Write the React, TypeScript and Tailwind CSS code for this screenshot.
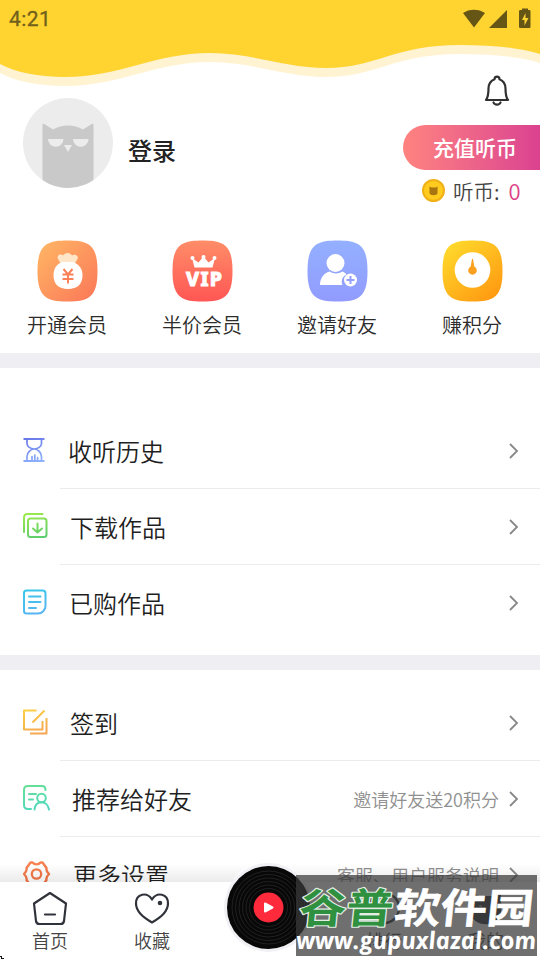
import type { ReactNode } from 'react'

const quickActions = [
  { label: '开通会员', icon: <MoneyBagIcon /> },
  { label: '半价会员', icon: <VipIcon /> },
  { label: '邀请好友', icon: <InviteIcon /> },
  { label: '赚积分', icon: <PointsIcon /> },
]

const TILE = 'M30.5 0.5C52 0.5 60.5 5 60.5 31S52 61.5 30.5 61.5 0.5 57 0.5 31 9 0.5 30.5 0.5Z'

function MoneyBagIcon() {
  return (
    <svg width="61" height="62" viewBox="0 0 61 62">
      <defs>
        <linearGradient id="bag" x1="0" y1="0" x2="1" y2="1">
          <stop offset="0" stopColor="#ffb865" />
          <stop offset="1" stopColor="#fb7658" />
        </linearGradient>
      </defs>
      <path d={TILE} fill="url(#bag)" />
      <path d="M24 24l-3-5c-1.500-4 2.500-5.500 5-3.500 1.500-3.500 7.500-3.500 9 0 3-2 7 .500 5.500 3.500l-3 5z" fill="#ffe6c8" />
      <path d="M25 22h11c6 2 9.500 7 9.500 13 0 9-5 14-14.500 14s-14.500-5-14.500-14c0-6 3-11 8.500-13Z" fill="#fff" />
      <path d="M26.500 29l4.500 5.500 4.500-5.500M25.500 34.500h11M25.500 39h11M31 34.500v9" fill="none" stroke="#fa8058" strokeWidth="2" />
    </svg>
  )
}

function VipIcon() {
  return (
    <svg width="61" height="62" viewBox="0 0 61 62">
      <defs>
        <linearGradient id="vip" x1="0" y1="0" x2="0" y2="1">
          <stop offset="0" stopColor="#ff8d68" />
          <stop offset="1" stopColor="#ff5654" />
        </linearGradient>
      </defs>
      <path d={TILE} fill="url(#vip)" />
      <path d="M20 18l6.500 4.500 5-6 5 6L43 18l-2.500 9.500h-18Z" fill="#fff" />
      <circle cx="20.500" cy="18" r="2" fill="#fff" />
      <circle cx="31.500" cy="17" r="2" fill="#fff" />
      <circle cx="42.500" cy="18" r="2" fill="#fff" />
      <text x="14" y="45.500" fill="#fff" stroke="#fff" strokeWidth="0.900" fontFamily="Noto Sans" fontWeight="800" fontSize="19.500" textLength="36" lengthAdjust="spacing">VIP</text>
    </svg>
  )
}

function InviteIcon() {
  return (
    <svg width="61" height="62" viewBox="0 0 61 62">
      <defs>
        <linearGradient id="invite" x1="0" y1="0" x2="0" y2="1">
          <stop offset="0" stopColor="#94b0ff" />
          <stop offset="1" stopColor="#919bfe" />
        </linearGradient>
      </defs>
      <path d={TILE} fill="url(#invite)" />
      <circle cx="28.500" cy="23" r="9" fill="#fff" />
      <path d="M13 45c0-7 4-12 9.500-13.500 4 2.500 9 2.500 13 0 1.500.500 3 1.500 4 3-5 2.500-5.500 7-4 10.500Z" fill="#fff" />
      <circle cx="43.500" cy="40" r="6.500" fill="#fff" />
      <path d="M39.500 40h8M43.500 36v8" stroke="#939fff" strokeWidth="2" />
    </svg>
  )
}

function PointsIcon() {
  return (
    <svg width="61" height="62" viewBox="0 0 61 62">
      <defs>
        <linearGradient id="points" x1="0.1" y1="0" x2="0.9" y2="1">
          <stop offset="0" stopColor="#ffdc2c" />
          <stop offset="1" stopColor="#ff9610" />
        </linearGradient>
      </defs>
      <path d={TILE} fill="url(#points)" />
      <circle cx="30.500" cy="30" r="17.800" fill="#fff" />
      <path d="M30 19h1l1.300 7.500a4.300 4.300 0 1 1-3.600 0Z" fill="#f9a01f" />
    </svg>
  )
}

function LineIcon({ id, from, to, children }: { id: string; from: string; to: string; children: ReactNode }) {
  return (
    <svg className="mb-[2px] shrink-0" width="28" height="26" viewBox="0 0 28 26" fill="none" stroke={`url(#${id})`} strokeWidth="2" strokeLinecap="round" strokeLinejoin="round">
      <defs>
        <linearGradient id={id} gradientUnits="userSpaceOnUse" x1="8" y1="0" x2="16" y2="26">
          <stop offset="0" stopColor={from} />
          <stop offset="1" stopColor={to} />
        </linearGradient>
      </defs>
      {children}
    </svg>
  )
}

const HistoryIcon = () => (
  <LineIcon id="history" from="#6878e8" to="#8fb4ff">
    <path d="M0.500 2h21M0.500 24h21" strokeLinecap="butt" />
    <path d="M4 2.500v4c0 3 3.500 5.500 7.200 5.500s7.300-2.500 7.300-5.500v-4M4 23.500v-4c0-3.500 3.500-7.500 7.200-7.500s7.300 4 7.300 7.500v4M9 23v-3.500M11.800 23v-5M14.600 23v-2.500" strokeWidth="1.700" />
  </LineIcon>
)

const DownloadIcon = () => (
  <LineIcon id="download" from="#9bea4b" to="#5ccc70">
    <path d="M1 19V4.500C1 2.500 2.500 1 4.500 1h15" />
    <rect x="5" y="5.500" width="18.500" height="18.500" rx="2.500" />
    <path d="M14.500 10.500v9M10 15.500l4.500 4 4.500-4" />
  </LineIcon>
)

const PurchasedIcon = () => (
  <LineIcon id="purchased" from="#39c7ea" to="#58b4f4">
    <path d="M3.500 1.500H19.500c2 0 3 1 3 3v12.500c0 4-3.500 7.500-7.500 7.500H3.500C2 24.500 1 23.500 1 22V4C1 2.500 2 1.500 3.500 1.500ZM6 7.500h11.500M6 13h11.500M6 19h7" />
  </LineIcon>
)

const SignIcon = () => (
  <LineIcon id="sign" from="#fad044" to="#f5a452">
    <path d="M13.500 1.500H1V20.500h18.500v-8.500M21.500 1.500L9.500 13.500M23.500 9v15.500H7" strokeLinecap="butt" />
  </LineIcon>
)

const RecommendIcon = () => (
  <LineIcon id="recommend" from="#66df96" to="#4ed8c0">
    <path d="M8 24H5c-2.500 0-4-1.500-4-4V5c0-2.500 1.500-4 4-4h14c2.500 0 3.500 1.500 3.500 4M6 9h7M6 14.500h4" />
    <circle cx="18.500" cy="13" r="4.300" />
    <path d="M11.500 24.500c.500-4 3-7.200 7-7.200s6.800 3.200 7.500 7.200" />
  </LineIcon>
)

const SettingsIcon = () => (
  <LineIcon id="settings" from="#f98452" to="#ef7040">
    <path strokeWidth="2.400" d="M7.500 1.500h2c2 2.500 6 2.500 8 0h2l4 5.500c-.800 2.500.500 4 2.500 6-2 2-3.300 3.500-2.500 6l-4 5.500h-2c-2-2.500-6-2.500-8 0h-2l-4-5.500c.800-2.500-.500-4-2.500-6 2-2 3.300-3.500 2.500-6Z" />
    <circle cx="13.500" cy="13" r="4.700" strokeWidth="2.300" />
  </LineIcon>
)

function Row({ icon, label, note, indent, last }: { icon: ReactNode; label: string; note?: string; indent: string; last?: boolean }) {
  return (
    <div className="relative flex h-[76px] shrink-0 items-center pl-[23px] pr-[20px]">
      {icon}
      <span className={`${indent} mb-[2px] flex-1 text-[24px] leading-[35px] text-[#1f1f1f]`}>{label}</span>
      {note && <span className="mr-[9px] text-[18px] leading-[27px] text-[#909090]">{note}</span>}
      <svg width="12" height="18" viewBox="0 0 12 18" fill="none" stroke="#888" strokeWidth="1.800">
        <path d="M2 2l7 7-7 7" />
      </svg>
      {!last && <i className="absolute bottom-0 left-[60px] right-0 h-px bg-[#ececec]" />}
    </div>
  )
}

function Tab({ label, children }: { label: string; children: ReactNode }) {
  return (
    <div className="flex w-[102px] flex-col items-center">
      <svg width="36" height="36" viewBox="0 0 36 36" fill="none" stroke="#30343a" strokeWidth="2.200" strokeLinecap="round" strokeLinejoin="round">
        {children}
      </svg>
      <span className="mt-px text-[18px] leading-[26px] text-[#444]">{label}</span>
    </div>
  )
}

export default function App() {
  return (
    <div className="relative flex h-[960px] w-[540px] flex-col overflow-hidden bg-white font-['Noto_Sans_CJK_SC',sans-serif] font-[350]">
      {/* Header with waves */}
      <header className="relative h-[98px] shrink-0">
        <svg className="absolute inset-0" width="540" height="98" viewBox="0 0 540 98">
          <path d="M0 0H540V63C515 56 490 54 460 54C395 54 375 77 326 77C286 77 252 62 210 62C155 62 120 86 65 86C38 86 15 81 0 73Z" fill="#fff3d1" />
          <path d="M0 0H540V54C515 47 490 45 460 45C395 45 375 68 326 68C286 68 252 53 210 53C155 53 120 77 65 77C38 77 15 72 0 64Z" fill="#ffd431" />
        </svg>
        <div className="relative flex items-center justify-between pl-[9px] pr-[9px] pt-[6px]">
          <span className="font-[Roboto] text-[21px] font-normal leading-[26px] tracking-[0.4px] text-[#70601b] [-webkit-text-stroke:0.3px_#70601b]">4:21</span>
          <svg width="68" height="22" viewBox="0 0 68 22" fill="#665616">
            <path d="M0 5C6 0.500 16 0.500 22 5L11 19.500ZM26 20L44 2v18Z" />
            <path d="M59 2V0.500h6V2h1c1 0 1.500.500 1.500 1.500V18.500c0 1-.500 1.500-1.500 1.500h-8.500c-1 0-1.500-.500-1.500-1.500V3.500c0-1 .500-1.500 1.500-1.500Z" />
            <path d="M62.500 5l-3.500 7h2.500v5.500l4-7.500h-3Z" fill="#ffd431" />
          </svg>
        </div>
        <svg className="absolute left-[483px] top-[75px]" width="28" height="32" viewBox="0 0 28 32" fill="none" stroke="#303030" strokeWidth="2.200" strokeLinecap="round" strokeLinejoin="round">
          <path d="M11.500 4.200c0-3.500 5-3.500 5 0 4.500 1.800 6 5 6 9.300 0 6 .200 8.500 2.500 11.500h-22c2.300-3 2.500-5.500 2.500-11.500 0-4.300 1.500-7.500 6-9.300ZM10.500 27.500c1 2.800 6 2.800 7 0" />
        </svg>
      </header>

      {/* Profile */}
      <section className="flex h-[142px] shrink-0 justify-between">
        <div className="flex h-[90px] pl-[23px]">
          <svg width="90" height="90" viewBox="0 0 90 90">
            <defs><clipPath id="avatar"><circle cx="45" cy="45" r="45" /></clipPath></defs>
            <circle cx="45" cy="45" r="45" fill="#ececec" />
            <path clipPath="url(#avatar)" d="M19.500 90V27c0-1.500 1.500-1.500 2.500-.500l8 5c9-5.500 21-5.500 30 0l8-5c1-1 2.500-1 2.500.500v63Z" fill="#c9c9c9" />
            <path d="M25 41h15.500a7.700 7.700 0 0 1-15.500 0ZM50 41h15.500a7.700 7.700 0 0 1-15.500 0ZM41 47h8L45 54Z" fill="#ececec" />
          </svg>
          <span className="ml-[15px] mt-[34px] text-[24px] font-medium leading-9 text-[#222]">登录</span>
        </div>
        <div className="pt-[27px]">
          <button className="block h-[45px] w-[137px] rounded-l-full bg-linear-to-r from-[#ff837f] to-[#db4190] pl-[7px] text-[21px] font-medium text-white">充值听币</button>
          <div className="mt-[5px] flex items-center pl-[19px]">
            <svg width="24" height="24" viewBox="0 0 24 24">
              <circle cx="11.500" cy="11.500" r="10.500" fill="#ffcb1e" stroke="#efb018" strokeWidth="2" />
              <path d="M7.500 7.500l2 1h4l2-1V14c0 3-8 3-8 0Z" fill="#a87510" />
            </svg>
            <span className="ml-[7px] text-[20.500px] leading-[30px] text-[#444]">听币:</span>
            <span className="mb-px ml-[9px] text-[22px] leading-[30px] text-[#dc3f86]">0</span>
          </div>
        </div>
      </section>

      {/* Quick actions */}
      <section className="grid h-[113px] shrink-0 grid-cols-4">
        {quickActions.map(a => (
          <div key={a.label} className="flex flex-col items-center">
            {a.icon}
            <span className="mr-px mt-[8px] text-[20px] leading-[30px] text-[#2c2c2c]">{a.label}</span>
          </div>
        ))}
      </section>

      <div className="h-[15px] shrink-0 bg-[#efeef3]" />

      <section className="flex h-[287px] shrink-0 flex-col pt-[45px]">
        <Row icon={<HistoryIcon />} label="收听历史" indent="ml-[17px]" />
        <Row icon={<DownloadIcon />} label="下载作品" indent="ml-[19px]" />
        <Row icon={<PurchasedIcon />} label="已购作品" indent="ml-[18px]" last />
      </section>

      <div className="h-[15px] shrink-0 bg-[#efeef3]" />

      <section className="flex shrink-0 flex-col pt-[15px]">
        <Row icon={<SignIcon />} label="签到" indent="ml-[19px]" />
        <Row icon={<RecommendIcon />} label="推荐给好友" note="邀请好友送20积分" indent="ml-[21px]" />
        <Row icon={<SettingsIcon />} label="更多设置" note="客服、用户服务说明" indent="ml-[22px]" last />
      </section>

      {/* Bottom tab bar */}
      <nav className="absolute inset-x-0 bottom-0 h-[96px]">
        <div className="h-[18px] bg-linear-to-b from-transparent to-black/8" />
        <svg className="absolute inset-0" width="540" height="96" viewBox="0 0 540 96">
          <path d="M0 18H210C221 18 225 22 228 27C240-12 296-12 308 27C312 22 316 18 327 18H540V96H0Z" fill="#fff" />
        </svg>
        <div className="absolute left-[-1px] top-[26px] flex">
          <Tab label="首页">
            <path d="M18 3L34 13.500 32 31c-.300 2-1.500 3-3.500 3h-21c-2 0-3.200-1-3.500-3L2 13.500ZM13 24.500h10" />
          </Tab>
          <Tab label="收藏">
            <path d="M18 32.500C9 27 2 21.500 2 13.500 2 3.500 13 1.500 18 9.500c5-8 16-6 16 4 0 8-7 13.500-16 19Z" />
            <circle cx="26" cy="13" r="1.200" fill="#30343a" />
          </Tab>
          <div className="w-[130px]" />
          <Tab label="排行">
            <circle cx="18" cy="18" r="15" />
            <path d="M23 13l-3 7-7 3 3-7Z" />
          </Tab>
          <Tab label="我的">
            <path d="M4 4l7 3h14l7-3v18c0 15-28 15-28 0Z" fill="#30343a" />
            <path d="M12 16h1M23 16h1" stroke="#888" />
          </Tab>
        </div>
        <svg className="absolute left-[224px] top-[-1px]" width="90" height="90" viewBox="0 0 90 90">
          <circle cx="44.500" cy="44.500" r="44.500" fill="#f1f1f5" />
          <circle cx="44.500" cy="44.500" r="41.500" fill="#080808" />
          {[19, 22.500, 26, 29.500, 33, 36.500].map(r => (
            <circle key={r} cx="44.500" cy="44.500" r={r} fill="none" stroke="#272727" strokeWidth="0.800" />
          ))}
          <circle cx="44.500" cy="44.500" r="15" fill="#ff2b3d" />
          <path d="M41 40.500v8l7.500-4Z" fill="#fff" stroke="#fff" strokeWidth="2" strokeLinejoin="round" />
        </svg>
        <svg className="absolute bottom-0 left-0" width="4" height="4"><path d="M0 0h2v2h2v1H1V1H0Z" fill="#111" /></svg>
      </nav>

      {/* Site stamp */}
      <svg className="absolute left-[296px] top-[875px] overflow-visible" width="244" height="85" viewBox="0 0 244 85">
        <rect width="241" height="81" fill="#3a3a3a" fillOpacity="0.73" />
        <g fontFamily="Noto Sans CJK SC" fontSize="41" fontWeight="700" transform="translate(0 48) skewX(-6)" strokeLinejoin="round">
          <text x="2" y="0" textLength="94" lengthAdjust="spacingAndGlyphs" fill="#2f9140" stroke="#e4eee5" strokeWidth="2.400" paintOrder="stroke">谷普</text>
          <text x="97" y="0" textLength="139" lengthAdjust="spacingAndGlyphs" fill="#fff" stroke="#fff" strokeWidth="0.500">软件园</text>
        </g>
        <text transform="translate(0 74) skewX(7)" x="1" y="0" fill="#fff" fontFamily="Open Sans" fontSize="24" fontWeight="700" fontStyle="italic" textLength="240" lengthAdjust="spacingAndGlyphs">www.gupuxlazal.com</text>
      </svg>
    </div>
  )
}
